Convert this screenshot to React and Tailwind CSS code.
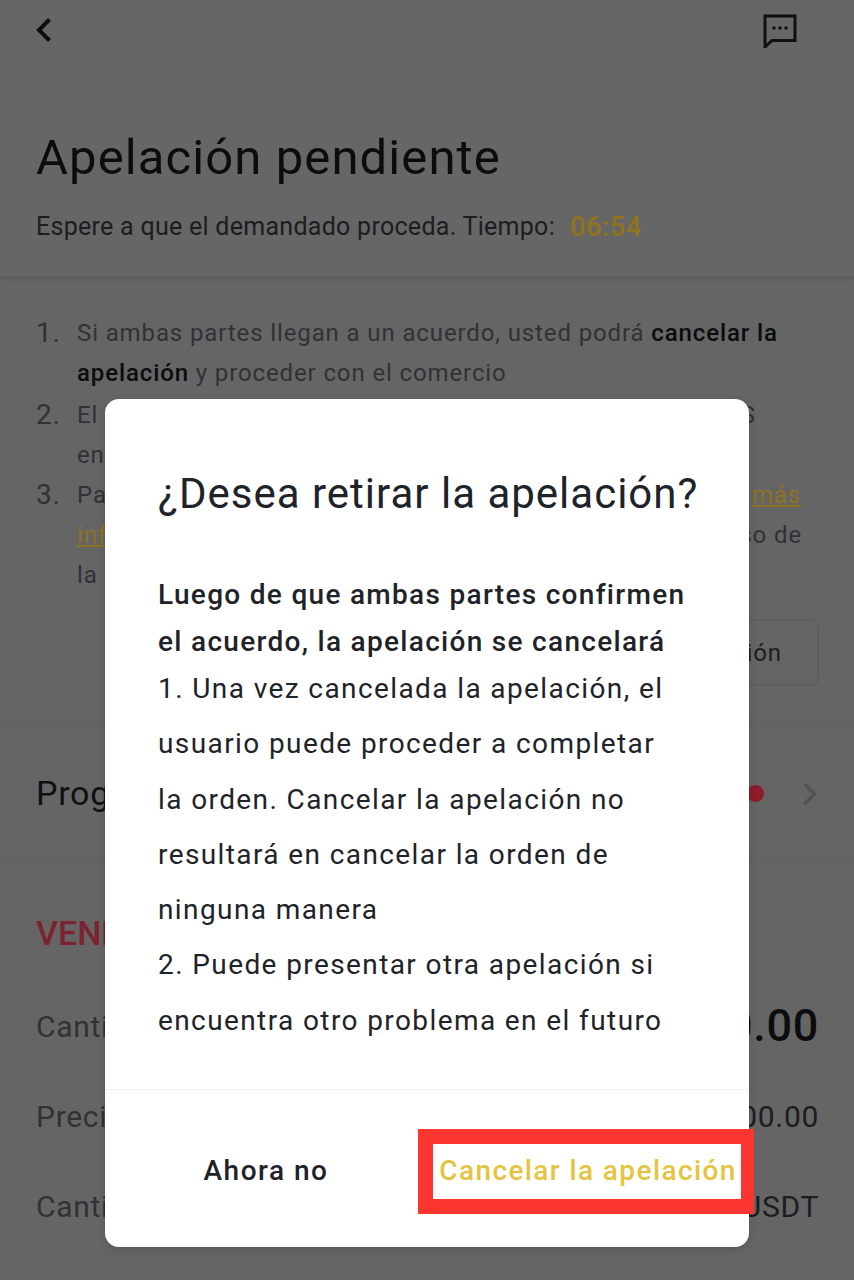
import React from "react";

const font = { fontFamily: '"Roboto", "Liberation Sans", sans-serif' };

function BackIcon() {
  return (
    <svg width="16" height="26" viewBox="0 0 16 26" fill="none">
      <path d="M13.5 2.5L3 13L13.5 23.5" stroke="#0c0d0f" strokeWidth="4" />
    </svg>
  );
}

function ChatIcon() {
  return (
    <svg width="34" height="34" viewBox="0 0 34 34" fill="none">
      <path d="M2 2H32V26.5H9L2 33V2Z" stroke="#0f1012" strokeWidth="3" />
      <circle cx="11" cy="14" r="1.7" fill="#0f1012" />
      <circle cx="17" cy="14" r="1.7" fill="#0f1012" />
      <circle cx="23" cy="14" r="1.7" fill="#0f1012" />
    </svg>
  );
}

function ForwardIcon() {
  return (
    <svg width="16" height="24" viewBox="0 0 16 24" fill="none">
      <path d="M2.5 2L12.5 12L2.5 22" stroke="#535353" strokeWidth="3.5" />
    </svg>
  );
}

function Row({ label, value, valueClass }) {
  return (
    <div className="flex items-center justify-between h-[90px] text-[30px] tracking-[0.7px] text-[#303236]">
      <span>{label}</span>
      <span className={valueClass}>{value}</span>
    </div>
  );
}

function BackgroundPage() {
  return (
    <div className="h-[1280px] overflow-hidden bg-[#656565]">
      <header className="h-[276px] bg-[#666666] shadow-[0_2px_6px_rgba(0,0,0,0.12)] pl-9 pr-[35px]">
        <div className="flex items-start justify-between pt-[14px] pr-[22px]">
          <div className="pt-[3px]"><BackIcon /></div>
          <ChatIcon />
        </div>
        <h1 className="mt-[82px] text-[49px] leading-[56px] tracking-[1.1px] text-[#0b0c0e]">Apelación pendiente</h1>
        <p className="mt-[26px] flex items-center text-[25px] leading-[30px] tracking-[0.28px] text-[#1b1d20]">
          Espere a que el demandado proceda. Tiempo:
          <span className="ml-[15px] text-[27px] font-semibold tracking-[0.5px] text-[#8f7321]">06:54</span>
        </p>
      </header>

      <section className="pl-9 pr-[35px] pt-[37px] h-[443px] text-[24px] leading-[40px] tracking-[0.88px] text-[#303236]">
        <div className="flex">
          <span className="w-[41px] text-[28px]">1.</span>
          <div className="flex-1">
            <p className="whitespace-nowrap">Si ambas partes llegan a un acuerdo, usted podrá <b className="font-medium text-[#0b0c0e]">cancelar la</b></p>
            <p className="whitespace-nowrap"><b className="font-medium text-[#0b0c0e]">apelación</b> y proceder con el comercio</p>
          </div>
        </div>
        <div className="flex mt-[2px]">
          <span className="w-[41px] text-[28px]">2.</span>
          <div className="flex-1">
            <div className="flex justify-between pr-[63px]"><span>El</span><span>S</span></div>
            <div>en</div>
          </div>
        </div>
        <div className="flex">
          <span className="w-[41px] text-[28px]">3.</span>
          <div className="flex-1">
            <div className="flex justify-between pr-[18px]"><span>Pa</span><span className="text-[#8f7321] underline">más</span></div>
            <div className="flex justify-between pr-[17px]"><span className="text-[#8f7321] underline">inf</span><span>so de</span></div>
            <div>la</div>
          </div>
        </div>
        <div className="flex justify-end mt-[24px]">
          <div className="flex h-[67px] w-[200px] items-center justify-end rounded-lg border-2 border-[#5e5e5e] pr-[35px] text-[#1b1d20]">apelación</div>
        </div>
      </section>

      <section className="flex h-[135px] items-center justify-between border-t-[8px] border-[#636363] pt-[6px] pl-9 pr-[36px]">
        <span className="text-[34px] tracking-[0.7px] text-[#0f1012]">Progreso</span>
        <div className="flex items-center gap-[38px]">
          <span className="h-[17px] w-[17px] rounded-full bg-[#8c1c2a]" />
          <ForwardIcon />
        </div>
      </section>

      <section className="border-t-[8px] border-[#636363] pl-9 pr-[35px] pt-[51px]">
        <div className="text-[34px] font-medium leading-[40px] text-[#7d2230]">VENDER</div>
        <div className="mt-[28px]">
          <Row label="Cantidad" value="1,000.00" valueClass="text-[45px] font-medium text-[#0b0c0e]" />
          <Row label="Precio" value="1,000.00" valueClass="text-[#1b1d20]" />
          <Row label="Cantidad" value="1.00 USDT" valueClass="text-[#1b1d20]" />
        </div>
      </section>
    </div>
  );
}

function AppealDialog() {
  return (
    <div className="absolute left-[105px] top-[399px] w-[644px] h-[848px] rounded-[14px] bg-white flex flex-col shadow-[0_2px_8px_rgba(0,0,0,0.15)]">
      <div className="flex-1 px-[53px] pt-[67px] whitespace-nowrap">
        <h2 className="text-[42px] leading-[56px] tracking-[1px] text-[#1e2329]">¿Desea retirar la apelación?</h2>
        <p className="mt-[49px] text-[28px] leading-[47px] font-medium tracking-[1.3px] text-[#1e2329]">
          Luego de que ambas partes confirmen<br />el acuerdo, la apelación se cancelará
        </p>
        <div className="text-[28px] leading-[55.3px] tracking-[1.4px] text-[#1e2329] -mt-[4px]">
          <p>1. Una vez cancelada la apelación, el<br />usuario puede proceder a completar<br />la orden. Cancelar la apelación no<br />resultará en cancelar la orden de<br />ninguna manera</p>
          <p>2. Puede presentar otra apelación si<br />encuentra otro problema en el futuro</p>
        </div>
      </div>
      <div className="h-[158px] border-t border-[#f0f0f0] flex items-center pt-[4px]">
        <button className="w-[322px] text-center text-[28px] font-medium tracking-[1.5px] text-[#1e2329]">Ahora no</button>
        <button className="w-[322px] text-center text-[28px] font-medium tracking-[1.4px] text-[#e4c441] whitespace-nowrap">Cancelar la apelación</button>
      </div>
    </div>
  );
}

export default function App() {
  return (
    <div className="relative w-[854px] h-[1280px] overflow-hidden" style={font}>
      <BackgroundPage />
      <AppealDialog />
      <div className="absolute left-[418px] top-[1129px] w-[336px] h-[85px] border-y-[15px] border-l-[15px] border-r-[13px] border-[#fb3530]" />
    </div>
  );
}
